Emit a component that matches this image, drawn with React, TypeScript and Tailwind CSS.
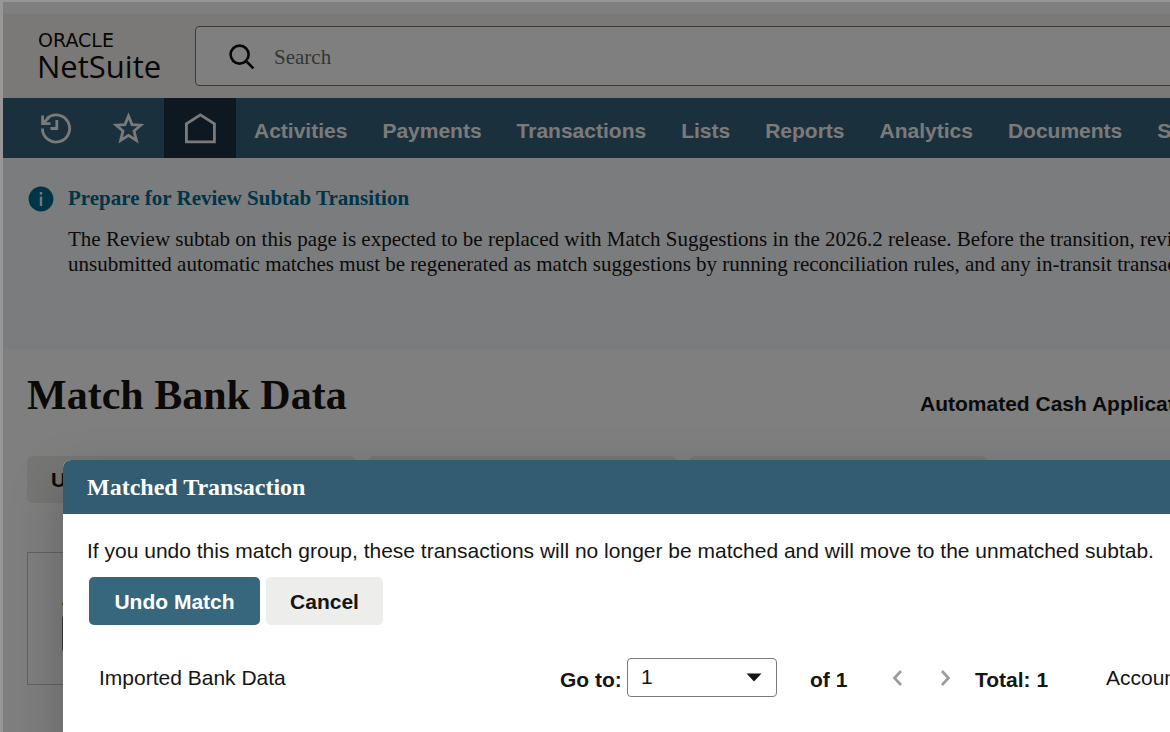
import type { ReactNode } from "react";

const NAV_LINKS = ["Activities", "Payments", "Transactions", "Lists", "Reports", "Analytics", "Documents", "Setup"];

function HistoryIcon() {
  return (
    <svg width="32" height="32" viewBox="0 0 32 32" fill="none" stroke="currentColor" strokeWidth="2.8" aria-hidden="true">
      <path d="M2.4 16.5A13.6 13.6 0 1 0 7 6.3" />
      <path d="M2.6 3.5V11.6H10.5" />
      <path d="M3 11.2L9 5.4" />
      <path d="M16.8 8V16.5H10.5" />
    </svg>
  );
}

function StarIcon() {
  return (
    <svg width="32" height="32" viewBox="0 0 32 32" fill="none" stroke="currentColor" strokeWidth="2.8" aria-hidden="true">
      <path d="M16.5 4L20 12.6L28.8 13.2L22 18.9L24.4 28.4L16.5 23.4L8.6 28.4L11 18.9L4.2 13.2L13 12.6Z" />
    </svg>
  );
}

function HomeIcon() {
  return (
    <svg width="32" height="32" viewBox="0 0 32 32" fill="none" stroke="currentColor" strokeWidth="2.8" aria-hidden="true">
      <path d="M2.4 29.8V11.8L16.4 2.8L30.4 11.8V29.8Z" />
    </svg>
  );
}

function Logo() {
  return (
    <a href="#home" aria-label="Oracle NetSuite" className="block w-[157px] shrink-0 text-[#0c0c0c]">
      <svg width="126" height="48" viewBox="0 0 126 48" fill="currentColor" aria-hidden="true">
        <text x="0" y="15" fontFamily="DejaVu Sans, sans-serif" fontSize="19">
          ORACLE
        </text>
        <text x="-1" y="46" fontFamily="Open Sans, sans-serif" fontSize="31">
          NetSuite
        </text>
      </svg>
    </a>
  );
}

function Header() {
  return (
    <header className="flex h-[84px] items-center bg-[#f5f3f0] pl-[35px]">
      <Logo />
      <label className="-mr-1 flex h-[60px] flex-1 items-center gap-[18px] rounded border border-[#777] bg-white pt-px pl-8">
        <svg width="28" height="28" viewBox="0 0 28 28" fill="none" stroke="#0c0c0c" strokeWidth="2.6" aria-hidden="true">
          <circle cx="11.6" cy="11.6" r="9" />
          <path d="M18 18L25.4 25.4" />
        </svg>
        <input
          type="search"
          aria-label="Search"
          placeholder="Search"
          className="min-w-0 flex-1 bg-transparent pt-[3px] font-['Liberation_Serif',serif] text-[21px] outline-none placeholder:text-[#6b6b6b]"
        />
      </label>
    </header>
  );
}

function NavIconButton({ label, active, children }: { label: string; active?: boolean; children: ReactNode }) {
  return (
    <button
      type="button"
      aria-label={label}
      className={`flex h-full w-[72px] shrink-0 items-center justify-center ${active ? "bg-[#1a3142]" : ""}`}
    >
      {children}
    </button>
  );
}

function NavBar() {
  return (
    <nav className="flex h-[60px] items-center bg-[#36607a] pl-[17px] text-[#f4f4f4]">
      <NavIconButton label="Recent records">
        <HistoryIcon />
      </NavIconButton>
      <NavIconButton label="Shortcuts">
        <StarIcon />
      </NavIconButton>
      <NavIconButton label="Home" active>
        <HomeIcon />
      </NavIconButton>
      {NAV_LINKS.map((link) => (
        <a key={link} href={`#${link.toLowerCase()}`} className="shrink-0 pt-[6px] pr-[17px] pl-[18px] text-[21px] font-bold">
          {link}
        </a>
      ))}
    </nav>
  );
}

function Notice() {
  return (
    <section className="flex h-[191px] gap-[14px] bg-[#f5f8fc] pl-[25px] pt-7 font-['Liberation_Serif',serif]">
      <svg width="26" height="26" viewBox="0 0 26 26" className="shrink-0" aria-hidden="true">
        <circle cx="13" cy="13" r="12.4" fill="#006b8f" />
        <rect x="11.8" y="10.5" width="2.4" height="9.5" fill="#e8eef2" />
        <rect x="11.8" y="6" width="2.4" height="2.6" fill="#e8eef2" />
      </svg>
      <div className="whitespace-nowrap text-[21px] leading-[25px] text-[#161513]">
        <h2 className="font-bold text-[#006b8f]">Prepare for Review Subtab Transition</h2>
        <p className="mt-4">
          The Review subtab on this page is expected to be replaced with Match Suggestions in the 2026.2 release. Before the transition, review
          <br />
          unsubmitted automatic matches must be regenerated as match suggestions by running reconciliation rules, and any in-transit transactions
        </p>
      </div>
    </section>
  );
}

function MatchPage() {
  return (
    <main className="pl-6 text-[21px] text-[#161513]">
      <div className="flex h-[107px] items-start justify-between whitespace-nowrap">
        <h1 className="mt-[22px] font-['Liberation_Serif',serif] text-[42px] leading-[48px] font-bold">Match Bank Data</h1>
        <a href="#automated-cash-application" className="mt-[42px] w-[250px] leading-[25px] font-bold">
          Automated Cash Application
        </a>
      </div>
      <div className="flex gap-3 font-bold">
        <button type="button" className="h-[47px] w-[329px] rounded-md bg-[#edecea] pl-6 text-left">
          Undo
        </button>
        <button type="button" aria-label="Match" className="h-[47px] w-[309px] rounded-md bg-[#edecea]" />
        <button type="button" aria-label="Import" className="h-[47px] w-[298px] rounded-md bg-[#edecea]" />
      </div>
      <section className="mt-[49px] h-[133px] border border-r-0 border-[#c4c4c4] pt-8 pl-[34px]">
        <label className="flex w-[400px] flex-col">
          <span className="leading-[25px]">Account</span>
          <select className="mt-1 h-[39px] rounded border border-[#777] bg-white px-3" />
        </label>
      </section>
    </main>
  );
}

function PageArrow({ label, d }: { label: string; d: string }) {
  return (
    <button type="button" aria-label={label} disabled className="flex w-12 shrink-0 justify-center pt-[2px] text-[#9b9b9b]">
      <svg width="16" height="20" viewBox="0 0 16 20" fill="none" stroke="currentColor" strokeWidth="2.6" aria-hidden="true">
        <path d={d} />
      </svg>
    </button>
  );
}

function MatchedTransactionDialog() {
  return (
    <section
      role="dialog"
      aria-labelledby="dialog-title"
      className="absolute top-[460px] right-0 bottom-0 left-[63px] overflow-hidden rounded-tl-lg bg-white text-[21px] text-[#161513]"
    >
      <header className="flex h-[54px] items-center bg-[#325c72] pl-6">
        <h2 id="dialog-title" className="font-['Liberation_Serif',serif] text-[24px] font-bold text-white">
          Matched Transaction
        </h2>
      </header>
      <div className="pt-6 pl-6 whitespace-nowrap">
        <p className="leading-[25px]">If you undo this match group, these transactions will no longer be matched and will move to the unmatched subtab.</p>
        <div className="mt-[14px] ml-[2px] flex gap-[6px] font-bold">
          <button type="button" className="h-12 w-[171px] rounded-[5px] bg-[#36677d] pt-[2px] text-white">
            Undo Match
          </button>
          <button type="button" className="h-12 w-[117px] rounded-[5px] bg-[#ededeb] pt-[2px]">
            Cancel
          </button>
        </div>
        <div className="mt-8 flex h-10 items-center pl-3">
          <h3 className="w-[461px] shrink-0 pt-[2px]">Imported Bank Data</h3>
          <label htmlFor="go-to" className="w-[67px] shrink-0 pt-[6px] font-bold">
            Go to:
          </label>
          <div className="relative w-[150px] shrink-0">
            <select id="go-to" className="h-[39px] w-full appearance-none rounded border border-[#7a7a7a] bg-white pl-[13px]">
              <option>1</option>
            </select>
            <svg width="16" height="9" viewBox="0 0 16 9" className="pointer-events-none absolute top-[15px] right-[15px]" aria-hidden="true">
              <path d="M0.5 0.5H15.5L8 8.5Z" fill="#161513" />
            </svg>
          </div>
          <span className="ml-[33px] w-[63px] shrink-0 pt-[6px] font-bold">of 1</span>
          <PageArrow label="Previous" d="M12 3L5.5 10L12 17" />
          <PageArrow label="Next" d="M5 3L11.5 10L5 17" />
          <span className="ml-[6px] w-[131px] shrink-0 pt-[6px] font-bold">Total: 1</span>
          <span className="pt-[2px]">Account</span>
        </div>
      </div>
    </section>
  );
}

export default function App() {
  return (
    <div className="relative h-screen overflow-hidden bg-[#979797] pt-[2px] pl-[3px] font-['Liberation_Sans',sans-serif]">
      <div className="relative h-full overflow-hidden bg-white pt-3">
        <Header />
        <NavBar />
        <Notice />
        <MatchPage />
        <div className="absolute inset-0 bg-black/50" />
        <div className="absolute top-[480px] -right-10 -bottom-10 left-[60px] shadow-[0_0_48px_rgba(0,0,0,0.25)]" />
      </div>
      <MatchedTransactionDialog />
    </div>
  );
}
